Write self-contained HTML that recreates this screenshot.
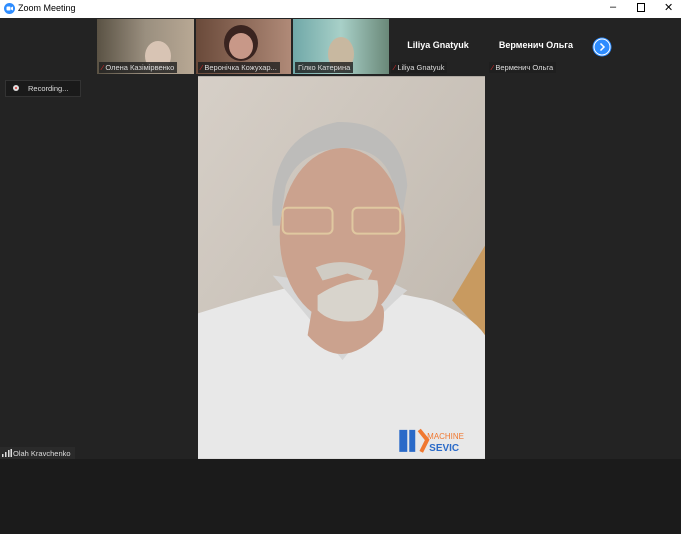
<!DOCTYPE html><html><head><style>
body{margin:0;width:681px;height:534px;overflow:hidden;background:#232323;font-family:"Liberation Sans","Noto Sans CJK SC",sans-serif;position:relative}
.a{position:absolute}
.tb{left:0;top:0;width:681px;height:18px;background:#fff;font-size:9px;color:#000}
.th{top:19px;height:55px;overflow:hidden}
.lbl{position:absolute;left:2px;bottom:1px;background:rgba(30,30,30,.8);color:#ddd;font-size:7.5px;padding:1px 3px;white-space:nowrap}
.lbl b{color:#e02828;font-weight:normal}
.nm{position:absolute;width:100%;top:21px;text-align:center;color:#fff;font-weight:bold;font-size:9px}
</style></head><body>
<div class="a tb"><svg class="a" style="left:4px;top:3px" width="11" height="11"><circle cx="5.5" cy="5.5" r="5.5" fill="#2d8cff"/><rect x="2.5" y="3.5" width="4" height="4" rx="1" fill="#fff"/><path d="M7 4.5l2-1v4l-2-1z" fill="#fff"/></svg><span class="a" style="left:18px;top:3px">Zoom Meeting</span>
<span class="a" style="left:610px;top:1px;font-size:11px">–</span><span class="a" style="left:637px;top:3px;width:6px;height:7px;border:1px solid #000"></span><span class="a" style="left:664px;top:1px;font-size:11px">✕</span></div>
<div class="a th" style="left:97px;width:97px;background:linear-gradient(90deg,#5a5244,#9a8f7f 50%,#b8a894)"><div class="a" style="left:48px;top:22px;width:26px;height:30px;border-radius:50%;background:#d8c4b4"></div><div class="lbl"><b>⁄</b> Олена Казімірвенко</div></div>
<div class="a th" style="left:196px;width:95px;background:linear-gradient(90deg,#6a4a3a,#b08a78)"><div class="a" style="left:28px;top:6px;width:34px;height:36px;border-radius:50%;background:#3a2420"></div><div class="a" style="left:33px;top:14px;width:24px;height:26px;border-radius:50%;background:#c89888"></div><div class="lbl"><b>⁄</b> Веронічка Кожухар...</div></div>
<div class="a th" style="left:293px;width:96px;background:linear-gradient(90deg,#70a8a8,#a8d0c8 50%,#6a8878)"><div class="a" style="left:35px;top:18px;width:26px;height:34px;border-radius:50%;background:#c8b8a0"></div><div class="lbl">Гілко Катерина</div></div>
<div class="a th" style="left:389px;width:98px;background:#232323"><div class="nm">Liliya Gnatyuk</div><div class="lbl"><b>⁄</b> Liliya Gnatyuk</div></div>
<div class="a th" style="left:487px;width:98px;background:#232323"><div class="nm">Верменич Ольга</div><div class="lbl"><b>⁄</b> Верменич Ольга</div></div>
<svg class="a" style="left:592px;top:37px" width="20" height="20"><circle cx="10" cy="10" r="9.5" fill="#2d8cff"/><circle cx="10" cy="10" r="8" fill="none" stroke="#fff" stroke-width="1"/><path d="M8.5 6.5l3.5 3.5-3.5 3.5" fill="none" stroke="#fff" stroke-width="1.5"/></svg>
<div class="a" style="left:5px;top:80px;width:74px;height:15px;background:#1a1a1a;border:1px solid #333;color:#ddd;font-size:7.5px"><span class="a" style="left:7px;top:4px;width:6px;height:6px;border-radius:50%;background:#ddd"></span><span class="a" style="left:9px;top:6px;width:2px;height:2px;border-radius:50%;background:#d33"></span><span class="a" style="left:22px;top:3px">Recording...</span></div>
<svg class="a" style="left:198px;top:76px" width="287" height="383" viewBox="0 0 288 384">
<defs><linearGradient id="w" x1="0" y1="0" x2="1" y2="1"><stop offset="0" stop-color="#d6cfc7"/><stop offset="1" stop-color="#bdb5ab"/></linearGradient></defs>
<rect width="288" height="384" fill="url(#w)"/>
<path d="M255 225L288 170V260Z" fill="#c89a60"/>
<path d="M0 238Q40 225 80 215L105 208 150 240 185 215 235 225Q275 240 288 260V384H0Z" fill="#e8e8e8"/>
<path d="M75 200Q110 240 145 285 180 240 210 215L190 205 150 240 110 205Z" fill="#d6d6d6"/>
<ellipse cx="145" cy="160" rx="63" ry="88" fill="#cba28e"/>
<path d="M110 260Q145 300 185 255 190 225 180 230L140 225 115 230Z" fill="#cba28e"/>
<path d="M75 150Q68 60 140 46 205 45 210 110L205 140 195 105Q185 72 145 72 100 75 88 110L82 150Z" fill="#bdbcba"/>
<path d="M120 220Q150 200 180 205 185 235 165 245 135 250 120 235Z" fill="#d8d4cc"/>
<path d="M118 192Q145 180 175 195L170 205 150 198 125 205Z" fill="#d0ccc4"/>
<rect x="85" y="132" width="50" height="26" rx="5" fill="none" stroke="#e0c8a0" stroke-width="2"/><rect x="155" y="132" width="48" height="26" rx="5" fill="none" stroke="#e0c8a0" stroke-width="2"/>
<path d="M202 355h8v22h-8zM212 355h6v22h-6z" fill="#2a6ac8"/><path d="M222 355l8 10-6 12" fill="none" stroke="#f07830" stroke-width="4"/>
<text x="230" y="364" font-size="8" fill="#f07830" font-family="Liberation Sans">MACHINE</text><text x="232" y="376" font-size="10" font-weight="bold" fill="#2a6ac8" font-family="Liberation Sans">SEVIC</text>
</svg>
<div class="a" style="left:0;top:447px;width:75px;height:12px;background:#2a2a2a;color:#ddd;font-size:7.5px"><svg class="a" style="left:2px;top:2px" width="10" height="8"><rect x="0" y="5" width="1.5" height="3" fill="#ddd"/><rect x="3" y="3" width="1.5" height="5" fill="#ddd"/><rect x="6" y="1" width="1.5" height="7" fill="#ddd"/><rect x="8.5" y="0" width="1.5" height="8" fill="#ddd"/></svg><span class="a" style="left:13px;top:2px">Olah Kravchenko</span></div>
<div class="a" style="left:0;top:459px;width:681px;height:75px;background:#1b1b1b"></div>
</body></html>
